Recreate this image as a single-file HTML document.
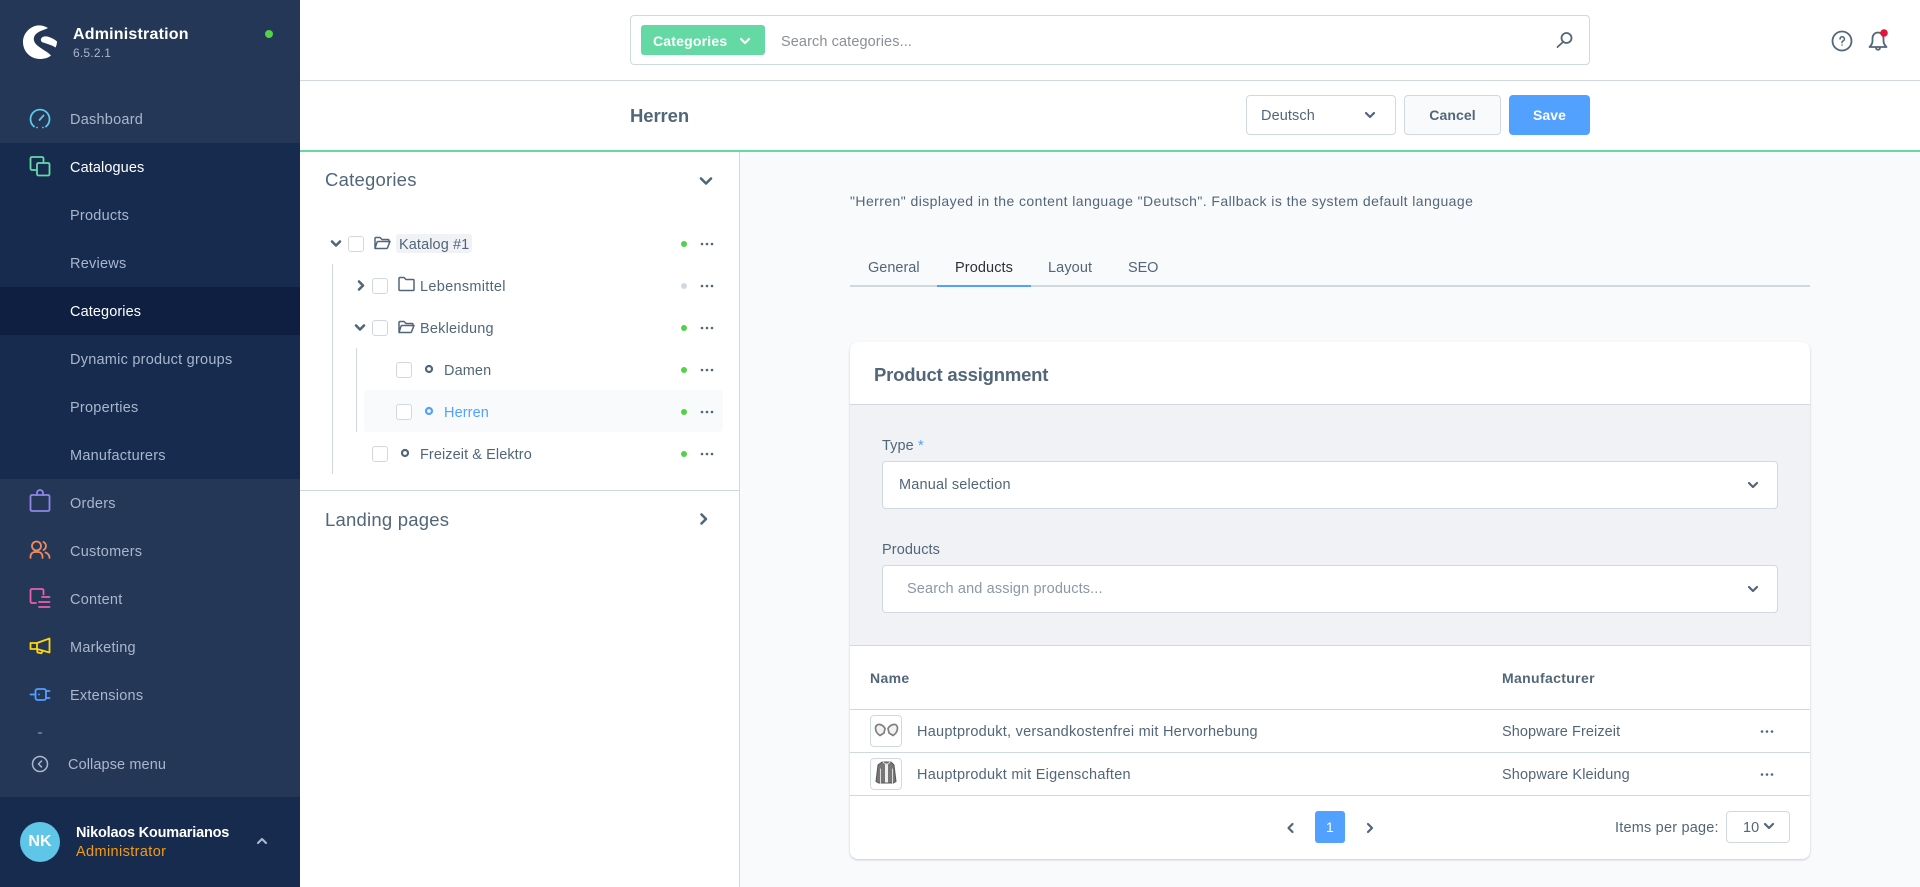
<!DOCTYPE html>
<html lang="en"><head><meta charset="utf-8"><title>Administration</title>
<style>
*{box-sizing:border-box}
html,body{margin:0;padding:0}
body{width:1920px;height:887px;overflow:hidden;position:relative;background:#f9fafb;font-family:"Liberation Sans",sans-serif;font-size:14.5px;letter-spacing:.1px;color:#52667a}
.b{position:absolute}
.t{position:absolute;white-space:nowrap;transform:translateY(calc(-50% + 1px));line-height:20px}
.s{color:#a9b7cd;letter-spacing:.24px}
.w{color:#fff}
.h{font-size:18.5px;letter-spacing:.22px}
.cb{position:absolute;width:16px;height:16px;border:1px solid #d1d9e0;border-radius:3px;background:#fff}
.field{position:absolute;background:#fff;border:1px solid #d1d9e0;border-radius:4px}
svg{position:absolute;left:0;top:0}
</style></head><body>
<div class="b" style="left:0;top:0;width:300px;height:887px;background:#253757"></div>
<div class="b" style="left:0;top:143px;width:300px;height:336px;background:#172b4f"></div>
<div class="b" style="left:0;top:287px;width:300px;height:48px;background:#0e1f42"></div>
<div class="b" style="left:0;top:797px;width:300px;height:90px;background:#172b4f"></div>
<div class="b" style="left:300px;top:0;width:1620px;height:150px;background:#fff"></div>
<div class="b" style="left:300px;top:80px;width:1620px;height:1px;background:#d1d9e0"></div>
<div class="b" style="left:300px;top:150px;width:1620px;height:2px;background:#65d9a4"></div>
<div class="b" style="left:300px;top:152px;width:440px;height:735px;background:#fff;border-right:1px solid #d1d9e0"></div>
<div class="b" style="left:300px;top:490px;width:439px;height:1px;background:#d1d9e0"></div>

<span class="t w" style="left:73px;top:34px;font-size:16px;font-weight:700;letter-spacing:.2px">Administration</span>
<span class="t s" style="left:73px;top:52px;font-size:12px;letter-spacing:.2px">6.5.2.1</span>
<span class="t s" style="left:70px;top:118.500px">Dashboard</span>
<span class="t w" style="left:70px;top:166.500px;letter-spacing:.1px">Catalogues</span>
<span class="t s" style="left:70px;top:214.500px">Products</span>
<span class="t s" style="left:70px;top:262.500px">Reviews</span>
<span class="t w" style="left:70px;top:310.500px;letter-spacing:.1px">Categories</span>
<span class="t s" style="left:70px;top:358.500px">Dynamic product groups</span>
<span class="t s" style="left:70px;top:406.500px">Properties</span>
<span class="t s" style="left:70px;top:454.500px">Manufacturers</span>
<span class="t s" style="left:70px;top:502.500px">Orders</span>
<span class="t s" style="left:70px;top:550.500px">Customers</span>
<span class="t s" style="left:70px;top:598.500px">Content</span>
<span class="t s" style="left:70px;top:646.500px">Marketing</span>
<span class="t s" style="left:70px;top:694.500px">Extensions</span>
<span class="t s" style="left:68px;top:764px;letter-spacing:.1px">Collapse menu</span>
<div class="b" style="left:20px;top:822px;width:40px;height:40px;border-radius:50%;background:#5fc6e8"></div>
<span class="t w" style="left:20px;width:40px;text-align:center;top:841px;font-size:16px;font-weight:700">NK</span>
<span class="t w" style="left:76px;top:832px;font-weight:700;font-size:14.5px;letter-spacing:-.2px">Nikolaos Koumarianos</span>
<span class="t" style="left:76px;top:851px;color:#f39c12;letter-spacing:.38px">Administrator</span>

<div class="field" style="left:630px;top:15px;width:960px;height:50px"></div>
<div class="b" style="left:641px;top:25px;width:124px;height:30px;background:#65d9a4;border-radius:3px"></div>
<span class="t w" style="left:653px;top:40px;font-weight:700;font-size:14px;letter-spacing:.2px">Categories</span>
<span class="t" style="left:781px;top:40.500px;color:#8a8f98">Search categories...</span>
<span class="t" style="left:630px;top:114.500px;font-size:18.500px;font-weight:700;letter-spacing:-.1px">Herren</span>
<div class="field" style="left:1246px;top:95px;width:150px;height:40px"></div>
<span class="t" style="left:1261px;top:115px">Deutsch</span>
<div class="b" style="left:1404px;top:95px;width:97px;height:40px;background:#f9fafb;border:1px solid #d1d9e0;border-radius:4px"></div>
<span class="t" style="left:1404px;width:97px;text-align:center;top:114px;font-weight:700;font-size:14px">Cancel</span>
<div class="b" style="left:1509px;top:95px;width:81px;height:40px;background:#52a0ff;border-radius:4px"></div>
<span class="t w" style="left:1509px;width:81px;text-align:center;top:114px;font-weight:700;font-size:14px">Save</span>

<span class="t h" style="left:325px;top:179px">Categories</span>
<span class="t h" style="left:325px;top:519px">Landing pages</span>
<div class="b" style="left:364px;top:390px;width:359px;height:42px;background:#f9fafb;border-radius:4px"></div>
<div class="b" style="left:396px;top:234px;width:76px;height:19px;background:#f0f2f5;border-radius:3px"></div>
<div class="b" style="left:332px;top:264px;width:1px;height:210px;background:#d1d9e0"></div>
<div class="b" style="left:356px;top:348px;width:1px;height:84px;background:#d1d9e0"></div>
<div class="cb" style="left:348px;top:236px"></div>
<div class="cb" style="left:372px;top:278px"></div>
<div class="cb" style="left:372px;top:320px"></div>
<div class="cb" style="left:396px;top:362px"></div>
<div class="cb" style="left:396px;top:404px"></div>
<div class="cb" style="left:372px;top:446px"></div>
<span class="t" style="left:399px;top:243.500px">Katalog #1</span>
<span class="t" style="left:420px;top:285.500px;letter-spacing:.3px">Lebensmittel</span>
<span class="t" style="left:420px;top:327.500px;letter-spacing:.2px">Bekleidung</span>
<span class="t" style="left:444px;top:369.500px">Damen</span>
<span class="t" style="left:444px;top:411.500px;color:#52a0ff">Herren</span>
<span class="t" style="left:420px;top:453.500px;letter-spacing:.08px">Freizeit &amp; Elektro</span>

<span class="t" style="left:850px;top:200px;letter-spacing:.43px;font-size:14px">"Herren" displayed in the content language "Deutsch". Fallback is the system default language</span>
<span class="t" style="left:868px;top:267px;letter-spacing:0">General</span>
<span class="t" style="left:955px;top:267px;color:#2b3136">Products</span>
<span class="t" style="left:1048px;top:267px">Layout</span>
<span class="t" style="left:1128px;top:267px;letter-spacing:-.1px">SEO</span>
<div class="b" style="left:850px;top:285px;width:960px;height:2px;background:#d1d9e0"></div>
<div class="b" style="left:937px;top:285px;width:94px;height:2px;background:#52a0ff"></div>

<div class="b" style="left:850px;top:342px;width:960px;height:517px;background:#fff;border-radius:8px;box-shadow:0 1px 2px rgba(70,90,110,.3);overflow:hidden">
<div class="b" style="left:0;top:62px;width:960px;height:242px;background:#f0f2f5;border-top:1px solid #d1d9e0;border-bottom:1px solid #d1d9e0"></div>
<div class="b" style="left:0;top:367px;width:960px;height:1px;background:#d1d9e0"></div>
<div class="b" style="left:0;top:410px;width:960px;height:1px;background:#d1d9e0"></div>
<div class="b" style="left:0;top:453px;width:960px;height:1px;background:#d1d9e0"></div>
</div>
<span class="t" style="left:874px;top:374px;font-size:18.5px;font-weight:700;letter-spacing:-.2px">Product assignment</span>
<span class="t" style="left:882px;top:444.500px">Type <span style="color:#52a0ff">*</span></span>
<div class="field" style="left:882px;top:461px;width:896px;height:48px"></div>
<span class="t" style="left:899px;top:484px;letter-spacing:.18px">Manual selection</span>
<span class="t" style="left:882px;top:548.500px">Products</span>
<div class="field" style="left:882px;top:565px;width:896px;height:48px"></div>
<span class="t" style="left:907px;top:588px;color:#8a98a8;letter-spacing:.13px">Search and assign products...</span>
<span class="t" style="left:870px;top:677px;font-weight:700;font-size:14px;letter-spacing:.35px">Name</span>
<span class="t" style="left:1502px;top:677px;font-weight:700;font-size:14px;letter-spacing:.35px">Manufacturer</span>
<div class="field" style="left:870px;top:715px;width:32px;height:32px"></div>
<div class="field" style="left:870px;top:758px;width:32px;height:32px"></div>
<span class="t" style="left:917px;top:730.500px;letter-spacing:.25px">Hauptprodukt, versandkostenfrei mit Hervorhebung</span>
<span class="t" style="left:917px;top:773.500px;letter-spacing:.25px">Hauptprodukt mit Eigenschaften</span>
<span class="t" style="left:1502px;top:730.500px;letter-spacing:.08px">Shopware Freizeit</span>
<span class="t" style="left:1502px;top:773.500px;letter-spacing:.12px">Shopware Kleidung</span>
<div class="b" style="left:1315px;top:811px;width:30px;height:32px;background:#52a0ff;border-radius:3px"></div>
<span class="t w" style="left:1315px;width:30px;text-align:center;top:826px;font-size:14px">1</span>
<span class="t" style="left:1615px;top:826.500px;letter-spacing:.2px">Items per page:</span>
<div class="field" style="left:1726px;top:811px;width:64px;height:32px"></div>
<span class="t" style="left:1743px;top:826.500px">10</span>

<svg width="1920" height="887" viewBox="0 0 1920 887" fill="none" stroke-linecap="round" stroke-linejoin="round">
<!-- logo -->
<path fill="#fff" d="M48 28C44 25.500 40 25 37 25.500 29 27 23 34 23 42c0 10 8 17 17 17 4 0 8-1 11-3.500-3-3.500-8-5.500-13-9.500-4-3-6-8-2-12 3-3 8-4 12-6z"/>
<path fill="#fff" d="M41 39c1-3 5-3 8-2 3 1 6 2.500 8 4.500 0 2-.5 4-1.500 6-3.500-2.500-9.500-4-12.500-5-1.500-.5-2.500-2-2-3.500z"/>
<circle cx="269" cy="34" r="4" fill="#52d149"/>
<!-- dashboard -->
<g stroke="#5ac8e8" stroke-width="1.800">
<path d="M34 126.500a9.500 9.500 0 1 1 12 0"/><path d="M37 127.500h.01M43 127.500h.01"/><path d="M39.500 120l4-4.500"/>
</g>
<!-- catalogues -->
<g stroke="#66dba6" stroke-width="1.800">
<path d="M36 170h-4a1.500 1.500 0 0 1-1.500-1.500v-10a1.500 1.500 0 0 1 1.500-1.500h10a1.500 1.500 0 0 1 1.500 1.500v3"/>
<rect x="37" y="163" width="12.500" height="12.500" rx="1.500"/>
</g>
<!-- orders -->
<g stroke="#9185ea" stroke-width="1.800">
<path d="M32 495h16a1.500 1.500 0 0 1 1.500 1.500v13a1.500 1.500 0 0 1-1.500 1.500H32a1.500 1.500 0 0 1-1.500-1.500v-13A1.500 1.500 0 0 1 32 495z"/>
<path d="M37 495v-2a3 3 0 0 1 6 0v2"/>
</g>
<!-- customers -->
<g stroke="#f08a5d" stroke-width="1.800">
<circle cx="36.500" cy="546" r="4.500"/><path d="M30.500 558v-1.500a4.500 4.500 0 0 1 4.500-4.500h3a4.500 4.500 0 0 1 4.500 4.500v1.500"/>
<path d="M43.500 542a4.500 4.500 0 0 1 0 8M45.500 552.500c2 .7 4 2 4 5.500"/>
</g>
<!-- content -->
<g stroke="#e85fae" stroke-width="1.800">
<path d="M36 603h-4a1.500 1.500 0 0 1-1.500-1.500v-11a1.500 1.500 0 0 1 1.500-1.500h10a1.500 1.500 0 0 1 1.500 1.500v4"/>
<path d="M42 597h7.500M39 602h10.500M39 607h10.500"/>
</g>
<!-- marketing -->
<g stroke="#ffd60a" stroke-width="1.800">
<path d="M37 643l12.500-4.500v14L37 649z"/><path d="M37 643h-6.500v6H37"/><path d="M37 649l.5 3.500 4 .8 1-2.500"/>
</g>
<!-- extensions -->
<g stroke="#52a0ff" stroke-width="1.800">
<rect x="35.500" y="689" width="10.500" height="11" rx="2"/>
<path d="M30.500 694.500h5M46 691h3.500M46 698h3.500M39 694.500h.01"/>
</g>
<path d="M38.500 733h3" stroke="#a9b7cd" stroke-width="1"/>
<!-- collapse -->
<g stroke="#a9b7cd" stroke-width="1.500">
<circle cx="40" cy="764" r="7.500"/><path d="M41.500 761l-3 3 3 3"/>
</g>
<path d="M258 843l4-4 4 4" stroke="#a9b7cd" stroke-width="2.200"/>
<!-- top -->
<path d="M741 39l4 4 4-4" stroke="#fff" stroke-width="2.200"/>
<g stroke="#52667a" stroke-width="1.800">
<circle cx="1566.500" cy="38" r="5"/><path d="M1562.500 42.500l-5 4.500"/>
<circle cx="1842" cy="41" r="9.500"/>
<path d="M1869.500 47c1.500-1.500 3-3 3-6v-3a5.500 5.500 0 0 1 11 0v3c0 3 1.500 4.500 3 6z"/>
<path d="M1876 47.500c0 3 4 3 4 0"/>
</g>
<path d="M1840 39a2.200 2.200 0 1 1 3 2c-.8 .4-1 .8-1 1.600M1842 45h.01" stroke="#52667a" stroke-width="1.500"/>
<circle cx="1884" cy="33" r="3.800" fill="#e5143c"/>
<path d="M1366 113l4 4 4-4" stroke="#52667a" stroke-width="2.200"/>
<!-- tree chevrons -->
<g stroke="#52667a" stroke-width="2.600">
<path d="M701 178.500l5 5 5-5"/>
<path d="M701.500 514.500l4.500 4.500-4.500 4.500"/>
<path d="M332 241.500l4 4 4-4"/>
<path d="M359 281.500l4 4-4 4"/>
<path d="M356 325.500l4 4 4-4"/>
</g>
<!-- folders -->
<g stroke="#52667a" stroke-width="1.500">
<path d="M375 248v-9.500a1 1 0 0 1 1-1h4l2 2h6a1 1 0 0 1 1 1v1.500M375 248.500h11.500a1 1 0 0 0 1-.7l2.500-6.300h-12a1 1 0 0 0-1 .7z"/>
<path d="M399 278.500a1 1 0 0 1 1-1h4l2 2h7a1 1 0 0 1 1 1v9a1 1 0 0 1-1 1h-13a1 1 0 0 1-1-1z"/>
<path d="M399 332v-9.500a1 1 0 0 1 1-1h4l2 2h6a1 1 0 0 1 1 1v1.500M399 332.500h11.500a1 1 0 0 0 1-.7l2.500-6.300h-12a1 1 0 0 0-1 .7z"/>
</g>
<!-- rings -->
<g stroke-width="2.200">
<circle cx="429" cy="369" r="3" stroke="#52667a"/>
<circle cx="429" cy="411" r="3" stroke="#52a0ff"/>
<circle cx="405" cy="453" r="3" stroke="#52667a"/>
</g>
<!-- status -->
<g fill="#52d149">
<circle cx="684" cy="244" r="3"/><circle cx="684" cy="328" r="3"/><circle cx="684" cy="370" r="3"/><circle cx="684" cy="412" r="3"/><circle cx="684" cy="454" r="3"/>
</g>
<circle cx="684" cy="286" r="3" fill="#d1d9e0"/>
<!-- dots -->
<g fill="#52667a">
<circle cx="702" cy="244" r="1.300"/><circle cx="707" cy="244" r="1.300"/><circle cx="712" cy="244" r="1.300"/>
<circle cx="702" cy="286" r="1.300"/><circle cx="707" cy="286" r="1.300"/><circle cx="712" cy="286" r="1.300"/>
<circle cx="702" cy="328" r="1.300"/><circle cx="707" cy="328" r="1.300"/><circle cx="712" cy="328" r="1.300"/>
<circle cx="702" cy="370" r="1.300"/><circle cx="707" cy="370" r="1.300"/><circle cx="712" cy="370" r="1.300"/>
<circle cx="702" cy="412" r="1.300"/><circle cx="707" cy="412" r="1.300"/><circle cx="712" cy="412" r="1.300"/>
<circle cx="702" cy="454" r="1.300"/><circle cx="707" cy="454" r="1.300"/><circle cx="712" cy="454" r="1.300"/>
<circle cx="1762" cy="731.500" r="1.300"/><circle cx="1767" cy="731.500" r="1.300"/><circle cx="1772" cy="731.500" r="1.300"/>
<circle cx="1762" cy="774.500" r="1.300"/><circle cx="1767" cy="774.500" r="1.300"/><circle cx="1772" cy="774.500" r="1.300"/>
</g>
<g stroke="#52667a" stroke-width="2.200">
<path d="M1749 483l4 4 4-4"/>
<path d="M1749 587l4 4 4-4"/>
<path d="M1292.500 824l-4 4 4 4"/>
<path d="M1368 824l4 4-4 4"/>
<path d="M1765 824l4 4 4-4"/>
</g>
<!-- gloves -->
<g stroke="#808080" stroke-width="1.700" fill="#f2f2f2">
<path d="M875.500 728c0-2.500 2.500-4 4.500-3.500 2 .5 4 2 5 4l-1 4.500-4 2.500c-2.500-1.500-4.500-4-4.500-7.500z"/>
<path d="M897.500 728c0-2.500-2-4-4-3.500-2.500 .5-4.500 2-5.500 4l1 4.500 4 2.500c2.500-1.500 4.500-4 4.500-7.500z"/>
</g>
<!-- jacket -->
<path d="M882 762h9l3 3 2 16.500-2.500 1.500h-15l-2.500-1.500 2-16.500z" fill="#777" stroke="#555" stroke-width="1"/>
<path d="M885 763.500h3v19h-3z" fill="#eee"/>
<path d="M880.500 769v14M892.500 769v14M883 762l3.500 3 3.500-3" stroke="#ddd" stroke-width="1"/>
</svg>
</body></html>
